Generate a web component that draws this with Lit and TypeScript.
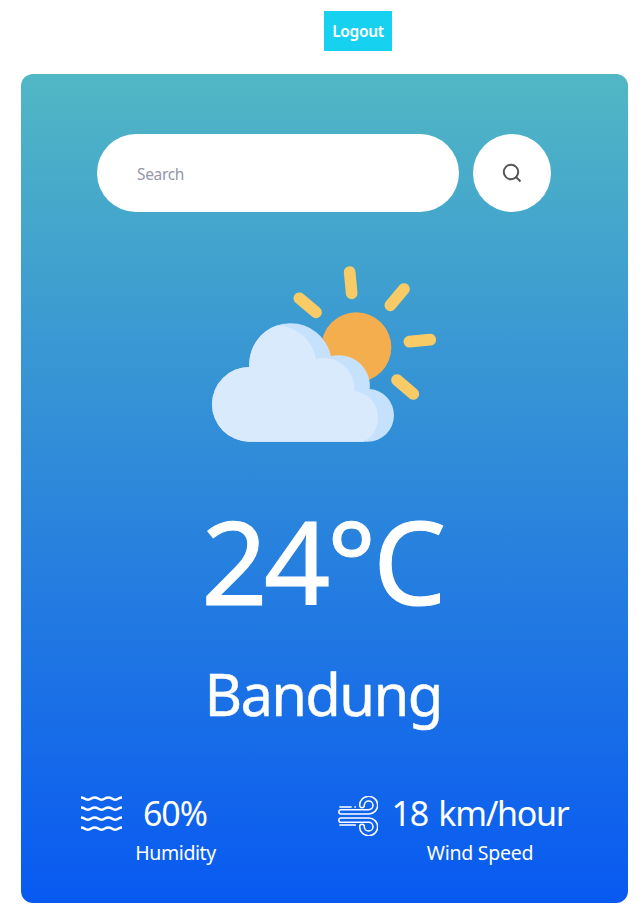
import { LitElement, html, css, svg } from "lit";
import { customElement } from "lit/decorators.js";

const waves = [4.5, 14.5, 24.5, 34.5];
const gust = "M9 41H92A13 13 0 1 0 79 28a7 7 0 0 1 -14 0A27 26.500 0 1 1 92 54H9A6.500 6.500 0 0 1 9 41Z";

@customElement("app-root")
export class AppRoot extends LitElement {
  static styles = css`
    :host { display: block; height: 921px; box-sizing: border-box; padding: 11px 16px 18px 21px; background: #fff; color: #fff; font-family: "Noto Sans", "Open Sans", sans-serif; }
    * { box-sizing: border-box; }
    svg { display: block; flex: none; }
    .logout { display: block; width: 68px; height: 40px; margin: 0 0 23px 303px; padding: 0; border: 0; background: #17d1f0; color: #fff; font: 600 15.5px/40px "Noto Sans", sans-serif; letter-spacing: -0.3px; text-align: center; }
    .card { width: 607px; height: 829px; border-radius: 12px; padding-top: 60px; background: linear-gradient(180deg, #51b7c4, #0859f1); display: flex; flex-direction: column; align-items: center; }
    .search { display: flex; gap: 14px; margin-left: -1px; }
    .field { width: 362px; height: 78px; border: 0; border-radius: 39px; padding: 2px 40px 0; background: #fff; font: 400 15.5px "Noto Sans", sans-serif; letter-spacing: -0.35px; outline: 0; }
    .field::placeholder { color: #9496a8; opacity: 1; }
    .go { width: 78px; height: 78px; padding: 0; border: 0; border-radius: 50%; background: #fff; display: flex; align-items: center; justify-content: center; }
    .weather { margin: 54px 2px 0 0; }
    .temp { margin: 58px 5px 0 0; height: 120px; font-size: 116px; line-height: 120px; letter-spacing: -3.5px; white-space: nowrap; -webkit-text-stroke: 1px #fff; }
    .city { margin: 38px 3px 0 0; height: 70px; font-size: 58px; line-height: 72px; letter-spacing: -1.7px; white-space: nowrap; -webkit-text-stroke: 0.4px #fff; }
    .stats { width: 100%; margin-top: 64px; padding: 0 60px; display: flex; justify-content: space-between; }
    .stat { display: flex; gap: 14px; }
    .stat svg { margin-top: 4px; }
    .text { width: 80px; display: flex; flex-direction: column; align-items: center; white-space: nowrap; }
    .text.wide { width: 176px; }
    .value { font-size: 34px; line-height: 42px; letter-spacing: -1.3px; word-spacing: 3px; }
    .label { margin-top: 5px; font-size: 19.5px; line-height: 28px; letter-spacing: -0.4px; }
    .wide .label { letter-spacing: -0.25px; }
    .text:not(.wide) .value { letter-spacing: -1px; margin-right: 2px; }
    .text:not(.wide) .label { margin-right: 1px; }
  `;

  render() {
    return html`
      <button class="logout">Logout</button>
      <main class="card">
        <div class="search">
          <input class="field" placeholder="Search" />
          <button class="go" aria-label="Search">
            <svg width="20" height="20" viewBox="0 0 20 20" fill="none" stroke="#555" stroke-width="2">
              <circle cx="9" cy="9" r="7.2" /><path d="M13.500 13.500l5 5" />
            </svg>
          </button>
        </div>
        <svg class="weather" width="224" height="176" viewBox="36 33 672 528">
          <circle cx="469" cy="277" r="105" fill="#f4ae4d" />
          <path fill="none" stroke="#f9cb66" stroke-width="35" stroke-linecap="round" d="M449 51L455 115M298 130L348 172M612 102L571 151M691 254L628 260M591 375L640 417" />
          <path fill="#c6e1fc" d="M148 560A112 112 0 0 1 148 336A123 123 0 0 1 271 205A123 123 0 0 1 393 304A92 92 0 0 1 509 402A78 79 0 0 1 582 481A79 79 0 0 1 503 560Z" />
          <path fill="#daeafd" d="M148 560A112 112 0 0 1 148 336A123 123 0 0 1 232 211A122 122 0 0 1 348 312A92 92 0 0 1 463 408A79 79 0 0 1 534 487A79 79 0 0 1 490 560Z" />
        </svg>
        <div class="temp">24°C</div>
        <div class="city">Bandung</div>
        <div class="stats">
          <div class="stat">
            <svg width="41" height="40" viewBox="0 0 40 40" preserveAspectRatio="none" fill="none" stroke="#fff" stroke-width="2.4">
              ${waves.map((y) => svg`<path d=${`M0 ${y - 3}c3.3 0 3.3 2.2 6.7 2.2s3.3-2.2 6.6-2.2 3.4 2.2 6.7 2.2 3.3-2.2 6.7-2.2 3.3 2.2 6.6 2.2 3.4-2.2 6.7-2.2`} />`)}
            </svg>
            <div class="text"><div class="value">60%</div><div class="label">Humidity</div></div>
          </div>
          <div class="stat">
            <svg width="40" height="40" viewBox="0 0 120 120" fill="none" stroke="#fff" stroke-width="4.5">
              <path d=${gust} />
              <path d=${gust} transform="translate(0 120) scale(1 -1)" />
              <path d="M4 33H41M49 33H54M4 87H54" />
            </svg>
            <div class="text wide"><div class="value">18 km/hour</div><div class="label">Wind Speed</div></div>
          </div>
        </div>
      </main>
    `;
  }
}
